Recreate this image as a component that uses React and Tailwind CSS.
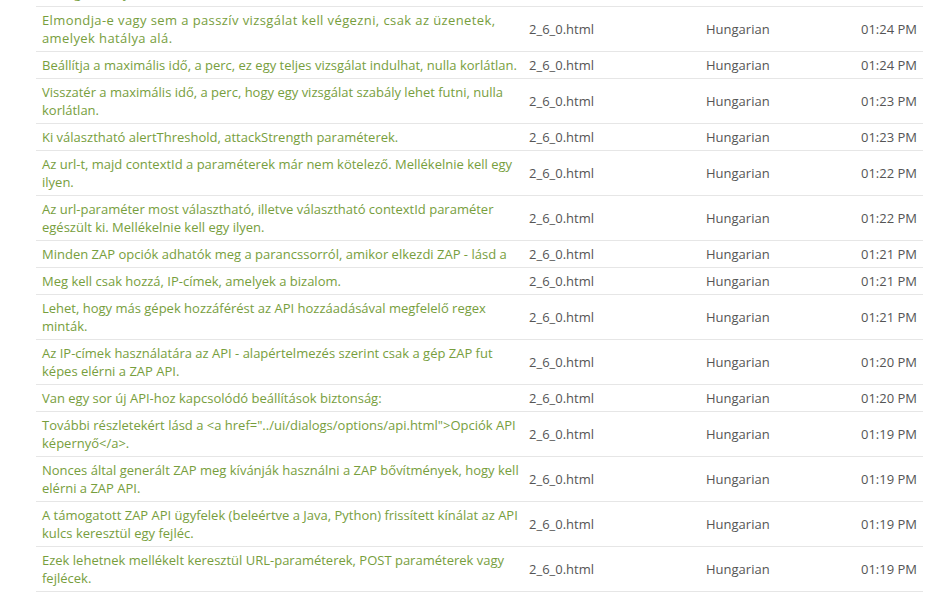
import React from "react";

const rows = [
  ["Elmondja-e vagy sem a passzív vizsgálat kell végezni, csak az üzenetek, amelyek hatálya alá.", "01:24 PM", true],
  ["Beállítja a maximális idő, a perc, ez egy teljes vizsgálat indulhat, nulla korlátlan.", "01:24 PM"],
  ["Visszatér a maximális idő, a perc, hogy egy vizsgálat szabály lehet futni, nulla korlátlan.", "01:23 PM"],
  ["Ki választható alertThreshold, attackStrength paraméterek.", "01:23 PM"],
  ["Az url-t, majd contextId a paraméterek már nem kötelező. Mellékelnie kell egy ilyen.", "01:22 PM"],
  ["Az url-paraméter most választható, illetve választható contextId paraméter egészült ki. Mellékelnie kell egy ilyen.", "01:22 PM"],
  ["Minden ZAP opciók adhatók meg a parancssorról, amikor elkezdi ZAP - lásd a", "01:21 PM"],
  ["Meg kell csak hozzá, IP-címek, amelyek a bizalom.", "01:21 PM"],
  ["Lehet, hogy más gépek hozzáférést az API hozzáadásával megfelelő regex minták.", "01:21 PM"],
  ["Az IP-címek használatára az API - alapértelmezés szerint csak a gép ZAP fut képes elérni a ZAP API.", "01:20 PM"],
  ["Van egy sor új API-hoz kapcsolódó beállítások biztonság:", "01:20 PM"],
  ["További részletekért lásd a <a href=\"../ui/dialogs/options/api.html\">Opciók API képernyő</a>.", "01:19 PM"],
  ["Nonces által generált ZAP meg kívánják használni a ZAP bővítmények, hogy kell elérni a ZAP API.", "01:19 PM"],
  ["A támogatott ZAP API ügyfelek (beleértve a Java, Python) frissített kínálat az API kulcs keresztül egy fejléc.", "01:19 PM"],
  ["Ezek lehetnek mellékelt keresztül URL-paraméterek, POST paraméterek vagy fejlécek.", "01:19 PM"],
];

export default function App() {
  return (
    <div
      className="bg-white w-[952px] h-[600px] overflow-hidden"
      style={{ fontFamily: '"Open Sans", "Liberation Sans", sans-serif' }}
    >
      <div className="ml-[36px] w-[887px] -mt-[38px]">
        <table className="w-full border-collapse table-fixed text-[13px] leading-[18px]">
          <colgroup>
            <col className="w-[487px]" />
            <col className="w-[177px]" />
            <col className="w-[110px]" />
            <col />
          </colgroup>
          <tbody>
            <tr className="border-b border-[#e6e6e6]">
              <td className="pl-[6px] pr-0 py-[4px] text-[#779e3d] align-middle">
                Az átvizsgálás most is csak azokat az üzeneteket érinti,
                <br />
                ezt a gőz kelt jó.
              </td>
              <td className="px-[6px] py-[4px] text-[#555] align-middle">2_6_0.html</td>
              <td className="px-[6px] py-[4px] text-[#555] align-middle">Hungarian</td>
              <td className="px-[6px] py-[4px] text-[#555] align-middle text-right">01:25 PM</td>
            </tr>
            {rows.map(([t, time, wide], i) => (
              <tr key={i} className="border-b border-[#e6e6e6]">
                <td
                  className={
                    wide
                      ? "pl-[6px] pr-0 py-[4px] text-[#779e3d] align-middle tracking-[0.4px]"
                      : "pl-[6px] pr-0 py-[4px] text-[#779e3d] align-middle"
                  }
                >
                  {t}
                </td>
                <td className="px-[6px] py-[4px] text-[#555] align-middle">2_6_0.html</td>
                <td className="px-[6px] py-[4px] text-[#555] align-middle">Hungarian</td>
                <td className="px-[6px] py-[4px] text-[#555] align-middle text-right">{time}</td>
              </tr>
            ))}
          </tbody>
        </table>
      </div>
    </div>
  );
}
